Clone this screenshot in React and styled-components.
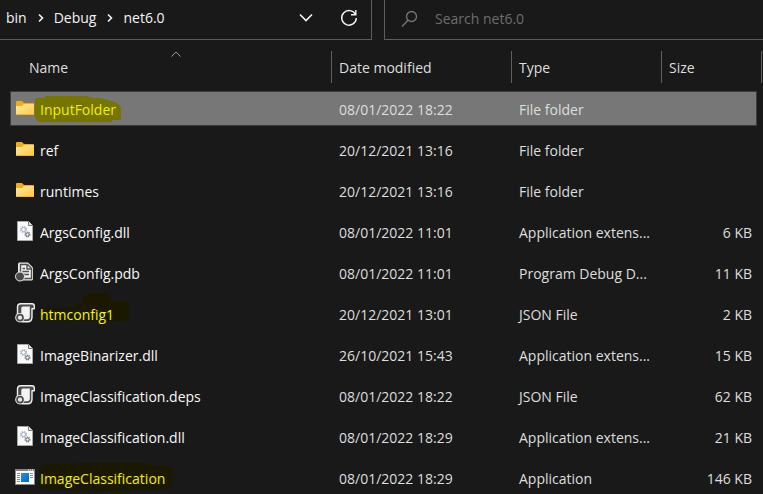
import React from "react";
import styled, { createGlobalStyle, css } from "styled-components";

const GlobalStyle = createGlobalStyle`
  * { box-sizing: border-box; }
  body {
    margin: 0;
    background: #191919;
    color: #dedede;
    font: 14px/20px "Open Sans", "Noto Sans", sans-serif;
    overflow: hidden;
  }
  button, input { font: inherit; color: inherit; }
`;

const columns = "minmax(0, 1fr) 180px 150px 101px";

const Explorer = styled.main`
  background: #191919;
`;

const Toolbar = styled.header`
  display: flex;
  gap: 12px;
  height: 40px;
`;

const AddressBar = styled.nav`
  flex: 0 1 372px;
  display: flex;
  align-items: center;
  padding: 0 10px 4px 6px;
  border: solid #5c5c5c;
  border-width: 0 1px 1px 0;
  color: #f4f4f4;
`;

const Crumbs = styled.ol`
  flex: 1;
  display: flex;
  align-items: center;
  margin: 0;
  padding: 0;
  list-style: none;
`;

const Crumb = styled.li`
  display: flex;
  align-items: center;

  & > svg { margin: 0 8px 0 9px; }
`;

const PlainButton = styled.button`
  display: flex;
  align-items: center;
  justify-content: center;
  padding: 0;
  border: 0;
  background: none;
`;

const IconButton = styled(PlainButton)`
  width: 24px;
  height: 24px;
  margin-left: ${(p) => (p.$spaced ? "19px" : "0")};
`;

const SearchBox = styled.label`
  flex: 1;
  min-width: 0;
  display: flex;
  align-items: center;
  gap: 16px;
  padding: 0 8px 2px 16px;
  border: solid #5c5c5c;
  border-width: 0 0 1px 1px;
  color: #777;
`;

const SearchInput = styled.input`
  flex: 1;
  min-width: 0;
  padding: 0;
  border: 0;
  outline: 0;
  background: none;

  &::placeholder { color: #6d6d6d; opacity: 1; }
`;

const FileTable = styled.table`
  display: block;
`;

const TableHead = styled.thead`
  display: block;
  padding: 11px 1px 8px 0;
`;

const HeadRow = styled.tr`
  display: grid;
  grid-template-columns: ${columns};
`;

const HeadCell = styled.th`
  position: relative;
  height: 32px;
  padding: 0 0 0 ${(p) => (p.$first ? "29px" : "7px")};
  border: solid #5f5f5f;
  border-width: 0 ${(p) => (p.$last ? "1px" : "0")} 0 ${(p) => (p.$first ? "0" : "1px")};
  font-weight: 400;
  text-align: left;
`;

const HeadButton = styled(PlainButton)`
  width: 100%;
  height: 100%;
  justify-content: flex-start;
  padding-top: 1px;
`;

const SortMark = styled.svg`
  position: absolute;
  top: 0;
  right: 150px;
`;

const TableBody = styled.tbody`
  display: grid;
  gap: 6px;
  padding: 0 6px 0 10px;
`;

const Row = styled.tr`
  display: grid;
  grid-template-columns: minmax(0, 1fr) 180px 150px 95px;
  height: 35px;
  border: 1px solid transparent;
  ${(p) =>
    p.$selected &&
    css`
      background: #777;
      border-color: #3c3c3c;
    `}
`;

const Cell = styled.td`
  padding: 8px 8px 0 8px;
  overflow: hidden;
  white-space: nowrap;
  text-overflow: ellipsis;
`;

const SizeCell = styled(Cell)`
  padding: 8px 4px 0 0;
  text-align: right;
`;

const NameCell = styled.td`
  display: flex;
  align-items: flex-start;
  gap: 5px;
  padding: 6px 0 0 4px;

  & > svg { flex: none; }
`;

const FileName = styled.span`
  position: relative;
  padding-top: 2px;
  white-space: nowrap;
  color: ${(p) => p.$color || "#f8f8f8"};
`;

const Marker = styled.svg`
  position: absolute;
  left: -5px;
  top: -14px;
`;

const Label = styled.span`
  position: relative;
`;

function FolderIcon() {
  return (
    <svg width="20" height="20" viewBox="0 0 20 20" aria-hidden="true">
      <defs>
        <linearGradient id="folder" x1="0" y1="0" x2="1" y2="1">
          <stop offset="0" stopColor="#ffe9a6" />
          <stop offset="1" stopColor="#ffc937" />
        </linearGradient>
      </defs>
      <path d="M1 4q0-1 1-1h5l2 2h9q1 0 1 1v10H1z" fill="#f5ab12" />
      <path d="M1 8h6l2-2h10v10q0 1-1 1H2q-1 0-1-1z" fill="url(#folder)" />
      <path d="M1 16.5h18" stroke="#edb438" />
    </svg>
  );
}

function DllIcon() {
  return (
    <svg width="20" height="20" viewBox="0 0 20 20" aria-hidden="true">
      <path d="M2.5.5h11l4 4v15h-15z" fill="#fafafa" stroke="#a9a9a9" />
      <path d="M13.5.5v4h4" fill="#e5e5e5" stroke="#777" />
      <circle cx="8.5" cy="8.5" r="2.8" fill="none" stroke="#b3bdc7" strokeWidth="1.6" strokeDasharray="1.5 .7" />
      <circle cx="8.5" cy="8.5" r="2" fill="none" stroke="#a8b3bf" />
      <circle cx="12.5" cy="13.5" r="2.3" fill="none" stroke="#7a8590" strokeWidth="1.4" strokeDasharray="1.1 .7" />
      <circle cx="12.5" cy="13.5" r="1.6" fill="none" stroke="#66727e" />
    </svg>
  );
}

function PdbIcon() {
  return (
    <svg width="20" height="20" viewBox="0 0 20 20" aria-hidden="true">
      <path d="M4 .5h9l5 5v12l-1 1H4l-1-2v-15z" fill="#e9e9e9" />
      <path d="M5.5 2.5h7l4 4v10h-11z" fill="#f1f1f1" stroke="#505050" strokeWidth="1.4" />
      <path d="M12 2.5V7h4.5M7.5 6.5H10M7.5 9.5H14M9 12.5h5" fill="none" stroke="#505050" strokeWidth="1.4" />
      <circle cx="5" cy="14.5" r="4.5" fill="#4a4a4a" stroke="#e6e6e6" />
    </svg>
  );
}

function ScriptIcon() {
  return (
    <svg width="20" height="20" viewBox="0 0 20 20" aria-hidden="true">
      <path
        d="M2.5 12V4q0-3.200 3.200-3.200H17q2.300 0 2.300 2.500v2.500H17V14q0 4.800-4.500 4.800H7z"
        fill="#4d4d4d"
        stroke="#f0f0f0"
        strokeWidth="1.400"
        strokeLinejoin="round"
      />
      <path d="M6.300 11V5q0-1.600 1.500-1.600h7V13q0 3.200-2.800 3.200H9.500z" fill="#f3f3f3" />
      <circle cx="5" cy="14.700" r="4.800" fill="#f0f0f0" />
      <circle cx="5" cy="14.700" r="3" fill="#e9e9e9" stroke="#4d4d4d" strokeWidth="1.700" />
    </svg>
  );
}

function ExeIcon() {
  return (
    <svg width="20" height="20" viewBox="0 0 20 20" aria-hidden="true">
      <defs>
        <linearGradient id="screen" x1="0" y1="0" x2="1" y2="1">
          <stop offset="0" stopColor="#2494e4" />
          <stop offset="1" stopColor="#006ac0" />
        </linearGradient>
      </defs>
      <path d="M.5 2.500h19v15H.5z" fill="#fafafa" stroke="#898989" />
      <path d="M0 2h20v2H0z" fill="#858585" />
      <path d="M13 3h1m1 0h1m1 0h1" stroke="#fff" />
      <path d="M2 6.500h3m-3 2h3m-3 2h3m-3 2h3m-3 2h3M15 6.500h3m-3 2h3m-3 2h3" stroke="#8c8c8c" />
      <path d="M6 6h8v9H6z" fill="url(#screen)" />
    </svg>
  );
}

const icons = { folder: FolderIcon, dll: DllIcon, pdb: PdbIcon, script: ScriptIcon, exe: ExeIcon };

const marks = {
  folder: {
    text: "#f2ee00",
    fill: "#757500",
    path: "M0 17q0-3 3-3h7v-2h42l6 2h7l15 4q6 3 6 7v9q0 2-2 2h-7v2H3l-3-5z",
  },
  config: {
    text: "#f5f500",
    fill: "#1a1900",
    path: "M2 19h16l20-1 9-4 2-7 8-3h16l3 3v5h15q3 0 3 3v14q0 3-4 3H54L4 31z",
  },
  app: {
    text: "#f3ef00",
    fill: "#1a1900",
    path: "M4 16l4-4 18-1 28-1h54l15 3h12q2 1 2 4v15l-3 4-46 1-17 2H62l-22-2H10l-5-3z",
  },
};

const files = [
  { icon: "folder", name: "InputFolder", date: "08/01/2022 18:22", type: "File folder", mark: "folder", selected: true },
  { icon: "folder", name: "ref", date: "20/12/2021 13:16", type: "File folder" },
  { icon: "folder", name: "runtimes", date: "20/12/2021 13:16", type: "File folder" },
  { icon: "dll", name: "ArgsConfig.dll", date: "08/01/2022 11:01", type: "Application extens...", size: "6 KB" },
  { icon: "pdb", name: "ArgsConfig.pdb", date: "08/01/2022 11:01", type: "Program Debug D...", size: "11 KB" },
  { icon: "script", name: "htmconfig1", date: "20/12/2021 13:01", type: "JSON File", size: "2 KB", mark: "config" },
  { icon: "dll", name: "ImageBinarizer.dll", date: "26/10/2021 15:43", type: "Application extens...", size: "15 KB" },
  { icon: "script", name: "ImageClassification.deps", date: "08/01/2022 18:22", type: "JSON File", size: "62 KB" },
  { icon: "dll", name: "ImageClassification.dll", date: "08/01/2022 18:29", type: "Application extens...", size: "21 KB" },
  { icon: "exe", name: "ImageClassification", date: "08/01/2022 18:29", type: "Application", size: "146 KB", mark: "app" },
];

const crumbs = ["bin", "Debug", "net6.0"];

function FileRow({ file }) {
  const Icon = icons[file.icon];
  const mark = marks[file.mark];
  return (
    <Row $selected={file.selected} aria-selected={!!file.selected}>
      <NameCell>
        <Icon />
        <FileName $color={mark?.text}>
          {mark && (
            <Marker width="140" height="44" aria-hidden="true">
              <path d={mark.path} fill={mark.fill} />
            </Marker>
          )}
          <Label>{file.name}</Label>
        </FileName>
      </NameCell>
      <Cell>{file.date}</Cell>
      <Cell>{file.type}</Cell>
      <SizeCell>{file.size}</SizeCell>
    </Row>
  );
}

export default function App() {
  return (
    <Explorer>
      <GlobalStyle />
      <Toolbar>
        <AddressBar aria-label="Address">
          <Crumbs>
            {crumbs.map((name, i) => (
              <Crumb key={name}>
                {i > 0 && (
                  <svg width="10" height="10" fill="none" stroke="currentColor" strokeWidth="1.600" aria-hidden="true">
                    <path d="M3 1.500L6.500 5 3 8.500" />
                  </svg>
                )}
                <PlainButton>{name}</PlainButton>
              </Crumb>
            ))}
          </Crumbs>
          <IconButton aria-label="Previous locations">
            <svg width="14" height="10" fill="none" stroke="currentColor" strokeWidth="1.600">
              <path d="M1 1.500l6 6 6-6" />
            </svg>
          </IconButton>
          <IconButton $spaced aria-label="Refresh">
            <svg width="18" height="18" fill="none" stroke="currentColor" strokeWidth="1.400">
              <path d="M15.500 5.500A7.300 7.300 0 1 0 16.300 9M15.800 1v4.800H11" />
            </svg>
          </IconButton>
        </AddressBar>
        <SearchBox>
          <svg width="18" height="18" fill="none" stroke="currentColor" strokeWidth="1.300" aria-hidden="true">
            <circle cx="10.500" cy="6.500" r="5" />
            <path d="M7 10.200L1 16.500" />
          </svg>
          <SearchInput type="search" aria-label="Search net6.0" placeholder="Search net6.0" />
        </SearchBox>
      </Toolbar>
      <FileTable>
        <TableHead>
          <HeadRow>
            <HeadCell $first aria-sort="ascending">
              <HeadButton>Name</HeadButton>
              <SortMark width="10" height="7" fill="none" stroke="#9a9a9a" aria-hidden="true">
                <path d="M.5 5.500L5 1l4.500 4.500" />
              </SortMark>
            </HeadCell>
            <HeadCell><HeadButton>Date modified</HeadButton></HeadCell>
            <HeadCell><HeadButton>Type</HeadButton></HeadCell>
            <HeadCell $last><HeadButton>Size</HeadButton></HeadCell>
          </HeadRow>
        </TableHead>
        <TableBody>
          {files.map((file) => (
            <FileRow key={file.name} file={file} />
          ))}
        </TableBody>
      </FileTable>
    </Explorer>
  );
}
